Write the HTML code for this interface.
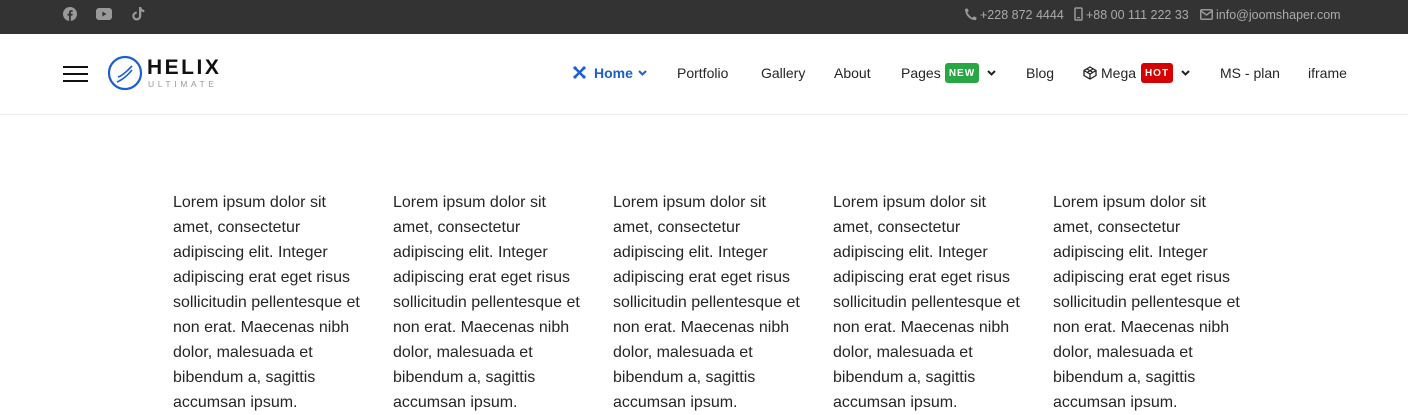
<!DOCTYPE html>
<html><head><meta charset="utf-8"><style>
*{margin:0;padding:0;box-sizing:border-box}
body{width:1408px;height:411px;overflow:hidden;background:#fff;font-family:"Liberation Sans",Arial,sans-serif;color:#252525;position:relative}
.top{position:absolute;left:0;top:0;width:1408px;height:34px;background:#333}
.a{position:absolute;white-space:nowrap}
.tb{color:#aaa;font-size:12.5px;top:8px}
.hdr{position:absolute;top:34px;left:0;width:1408px;height:81px;border-bottom:1px solid #eee}
.nav{font-size:14px;top:65px;color:#252525}
.badge{position:absolute;top:63px;height:20px;border-radius:3px;color:#fff;font-size:10px;font-weight:bold;letter-spacing:1px;text-align:center;line-height:21px}
.col{position:absolute;top:190px;width:195px;font-size:16px;line-height:25px;color:#252525}
</style></head><body>
<div class="top"></div>
<svg class="a" style="left:63px;top:7px" width="14" height="14" viewBox="0 0 14 14"><circle cx="7" cy="7" r="7" fill="#999"/><path d="M7.8 14V8.6h1.6l.3-1.8H7.8V5.7c0-.5.2-.9.9-.9h1V3.2c-.3 0-.9-.1-1.4-.1-1.5 0-2.3.9-2.3 2.4v1.3H4.5v1.8H6V14z" fill="#333"/></svg>
<svg class="a" style="left:96px;top:8px" width="16" height="12" viewBox="0 0 16 12"><rect width="16" height="12" rx="3" fill="#999"/><path d="M6.3 3.5v5l4.2-2.5z" fill="#333"/></svg>
<svg class="a" style="left:132px;top:6px" width="13" height="15" viewBox="0 0 13 15"><path d="M7 1v9a2.3 2.3 0 1 1-2.3-2.3V5.5A4.5 4.5 0 1 0 9.3 10V5.2a5 5 0 0 0 3 1V4A3 3 0 0 1 9.3 1z" fill="#999"/></svg>
<svg class="a" style="left:964px;top:8px" width="13" height="13" viewBox="0 0 13 13"><path d="M12.5 9.5l-2.6-1.2-1.3 1.5C6.6 8.9 4.3 6.4 3.3 4.4l1.5-1.3L3.6.5 1 .9C1 7.5 6.4 12.5 12.1 12.1z" fill="#999"/></svg>
<div class="a tb" style="left:980px">+228 872 4444</div>
<svg class="a" style="left:1074px;top:7px" width="9" height="14" viewBox="0 0 9 14"><rect x="1" y="1" width="7" height="12" rx="1" fill="none" stroke="#999" stroke-width="1.5"/><rect x="3" y="10" width="3" height="1.2" fill="#999"/></svg>
<div class="a tb" style="left:1086px">+88 00 111 222 33</div>
<svg class="a" style="left:1200px;top:9px" width="13" height="11" viewBox="0 0 13 11"><rect x=".75" y=".75" width="11.5" height="9.5" rx="1" fill="none" stroke="#999" stroke-width="1.5"/><path d="M1 2l5.5 4L12 2" fill="none" stroke="#999" stroke-width="1.4"/></svg>
<div class="a tb" style="left:1216px">info@joomshaper.com</div>

<div class="hdr"></div>
<div class="a" style="left:63px;top:66px;width:25px;height:2px;background:#111"></div>
<div class="a" style="left:63px;top:73px;width:25px;height:2px;background:#111"></div>
<div class="a" style="left:63px;top:80px;width:25px;height:2px;background:#111"></div>
<svg class="a" style="left:107px;top:55px" width="36" height="36" viewBox="0 0 36 36"><circle cx="18" cy="18" r="16" fill="none" stroke="#1a5fd1" stroke-width="2.2"/><path d="M11 22c4-1 9-6 14-11M10 27c5-2 10-6 15-12" fill="none" stroke="#1a5fd1" stroke-width="1.6"/></svg>
<div class="a" style="left:147px;top:56px;font-size:21px;font-weight:900;letter-spacing:2.5px;color:#111">HELIX</div>
<div class="a" style="left:148px;top:79px;font-size:8.5px;letter-spacing:3.6px;color:#999">ULTIMATE</div>

<svg class="a" style="left:573px;top:66px" width="13" height="13" viewBox="0 0 13 13"><path d="M2 2l9 9M11 2l-9 9" stroke="#1a5fd1" stroke-width="2.5"/><circle cx="2" cy="2" r="1.6" fill="#1a5fd1"/><circle cx="11" cy="2" r="1.6" fill="#1a5fd1"/><circle cx="2" cy="11" r="1.6" fill="#1a5fd1"/><circle cx="11" cy="11" r="1.6" fill="#1a5fd1"/></svg>
<div class="a nav" style="left:594px;color:#1a5fd1;font-weight:bold">Home</div>
<svg class="a" style="left:638px;top:70px" width="9" height="6" viewBox="0 0 9 6"><path d="M1 1l3.5 3.5L8 1" fill="none" stroke="#1a5fd1" stroke-width="2"/></svg>
<div class="a nav" style="left:677px">Portfolio</div>
<div class="a nav" style="left:761px">Gallery</div>
<div class="a nav" style="left:834px">About</div>
<div class="a nav" style="left:901px">Pages</div>
<div class="badge" style="left:945px;width:34px;background:#28a745">NEW</div>
<svg class="a" style="left:987px;top:70px" width="9" height="6" viewBox="0 0 9 6"><path d="M1 1l3.5 3.5L8 1" fill="none" stroke="#222" stroke-width="2"/></svg>
<div class="a nav" style="left:1026px">Blog</div>
<svg class="a" style="left:1083px;top:66px" width="14" height="14" viewBox="0 0 14 14"><path d="M7 1l6 3.5v5L7 13 1 9.5v-5zM1 4.5L7 8l6-3.5M7 8v5M4 3l6 3.5M10 3L4 6.5" fill="none" stroke="#222" stroke-width="1.3"/></svg>
<div class="a nav" style="left:1101px">Mega</div>
<div class="badge" style="left:1141px;width:32px;background:#d50000">HOT</div>
<svg class="a" style="left:1181px;top:70px" width="9" height="6" viewBox="0 0 9 6"><path d="M1 1l3.5 3.5L8 1" fill="none" stroke="#222" stroke-width="2"/></svg>
<div class="a nav" style="left:1220px">MS - plan</div>
<div class="a nav" style="left:1308px">iframe</div>

<div class="col" style="left:173px">Lorem ipsum dolor sit amet, consectetur adipiscing elit. Integer adipiscing erat eget risus sollicitudin pellentesque et non erat. Maecenas nibh dolor, malesuada et bibendum a, sagittis accumsan ipsum.</div>
<div class="col" style="left:393px">Lorem ipsum dolor sit amet, consectetur adipiscing elit. Integer adipiscing erat eget risus sollicitudin pellentesque et non erat. Maecenas nibh dolor, malesuada et bibendum a, sagittis accumsan ipsum.</div>
<div class="col" style="left:613px">Lorem ipsum dolor sit amet, consectetur adipiscing elit. Integer adipiscing erat eget risus sollicitudin pellentesque et non erat. Maecenas nibh dolor, malesuada et bibendum a, sagittis accumsan ipsum.</div>
<div class="col" style="left:833px">Lorem ipsum dolor sit amet, consectetur adipiscing elit. Integer adipiscing erat eget risus sollicitudin pellentesque et non erat. Maecenas nibh dolor, malesuada et bibendum a, sagittis accumsan ipsum.</div>
<div class="col" style="left:1053px">Lorem ipsum dolor sit amet, consectetur adipiscing elit. Integer adipiscing erat eget risus sollicitudin pellentesque et non erat. Maecenas nibh dolor, malesuada et bibendum a, sagittis accumsan ipsum.</div>
</body></html>
